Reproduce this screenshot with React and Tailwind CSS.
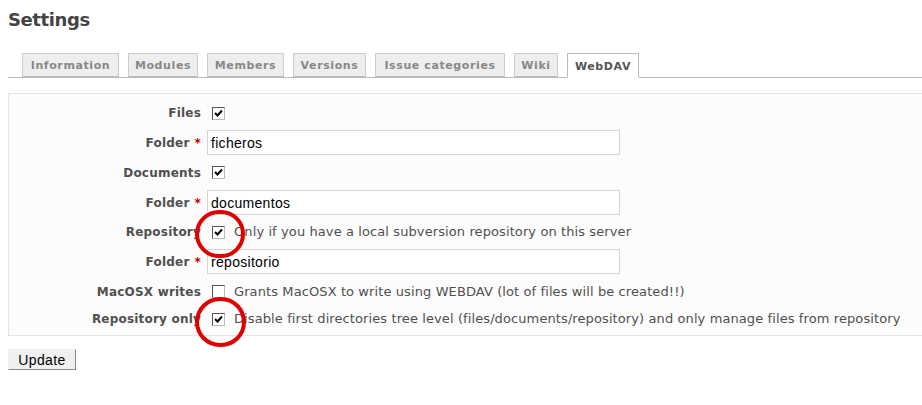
import React from "react";

const tabs = [
  { label: "Information", w: "w-[97px]" },
  { label: "Modules", w: "w-[70px]" },
  { label: "Members", w: "w-[77px]" },
  { label: "Versions", w: "w-[73px]" },
  { label: "Issue categories", w: "w-[130px]" },
  { label: "Wiki", w: "w-[44px]" },
  { label: "WebDAV", w: "w-[72px]", active: true },
];

function Check({ checked }) {
  return (
    <span className="inline-flex h-[13px] w-[13px] items-center justify-center border border-t-[#555] border-l-[#555] border-r-[#bbb] border-b-[#bbb] bg-white">
      {checked && (
        <svg width="9" height="9" viewBox="0 0 9 9">
          <path d="M1 4 L3.5 6.5 L8 1.5" fill="none" stroke="#000" strokeWidth="2" />
        </svg>
      )}
    </span>
  );
}

function Label({ children, req }) {
  return (
    <div className="w-[200px] pr-[8px] text-right text-[12px] font-bold tracking-[0.2px] text-[#505050]">
      {children}
      {req && <span className="ml-[5px] text-[#bb0000]">*</span>}
    </div>
  );
}

function CheckRow({ label, checked, note, h }) {
  return (
    <div className={"flex items-center " + h}>
      <Label>{label}</Label>
      <div className="ml-[3px] flex items-center">
        <Check checked={checked} />
        {note && <span className="ml-[9px] text-[13px] tracking-[0.1px] text-[#505050]">{note}</span>}
      </div>
    </div>
  );
}

function FolderRow({ value, h }) {
  return (
    <div className={"flex items-center " + h}>
      <Label req>Folder</Label>
      <div className="ml-[-2px] flex h-[25px] w-[413px] items-end border border-[#d4d4d4] bg-white pl-[3px] text-[14px] tracking-[0.3px] text-black [font-family:'Liberation_Sans',Arial,sans-serif]">
        {value}
      </div>
    </div>
  );
}

export default function App() {
  return (
    <div className="relative h-[405px] w-[922px] overflow-hidden bg-white [font-family:'DejaVu_Sans',Verdana,sans-serif]">
      <div className="pl-[8px] pt-[6px] text-[18px] font-bold tracking-[-0.4px] text-[#444]">Settings</div>

      <div className="ml-[8px] mt-[20px] flex gap-[9px] border-b border-[#bbb] pl-[14px]">
        {tabs.map((t) => (
          <div
            key={t.label}
            className={
              "mb-[-1px] flex h-[24px] items-center justify-center border pt-[3px] text-[11px] font-bold tracking-[0.6px] " +
              t.w +
              (t.active
                ? " h-[25px] border-[#bbb] border-b-white bg-white text-[#555]"
                : " border-[#ccc] border-b-[#bbb] bg-[#eee] text-[#888]")
            }
          >
            {t.label}
          </div>
        ))}
      </div>

      <div className="ml-[8px] mt-[15px] w-[930px] border border-[#e4e4e4] bg-[#fcfcfc] pt-[4px] pb-[4px]">
        <CheckRow label="Files" checked h="h-[30px]" />
        <FolderRow value="ficheros" h="h-[29px]" />
        <CheckRow label="Documents" checked h="h-[31px]" />
        <FolderRow value="documentos" h="h-[29px]" />
        <CheckRow label="Repository" checked h="h-[30px]" note="Only if you have a local subversion repository on this server" />
        <FolderRow value="repositorio" h="h-[29px]" />
        <CheckRow label="MacOSX writes" h="h-[31px]" note="Grants MacOSX to write using WEBDAV (lot of files will be created!!)" />
        <CheckRow label="Repository only" checked h="h-[24px]" note="Disable first directories tree level (files/documents/repository) and only manage files from repository" />
      </div>

      <div className="ml-[8px] mt-[12px]">
        <button className="h-[21px] w-[68px] border border-t-[#eee] border-l-[#eee] border-r-[#888] border-b-[#888] bg-[#f0f0f0] text-[14px] tracking-[0.4px] text-black [font-family:'Liberation_Sans',Arial,sans-serif]">
          Update
        </button>
      </div>

      <div className="absolute left-[195px] top-[210px] h-[48px] w-[50px] rounded-full border-[4px] border-[#e00000]" />
      <div className="absolute left-[195px] top-[297px] h-[50px] w-[51px] rounded-full border-[4px] border-[#e00000]" />
    </div>
  );
}
